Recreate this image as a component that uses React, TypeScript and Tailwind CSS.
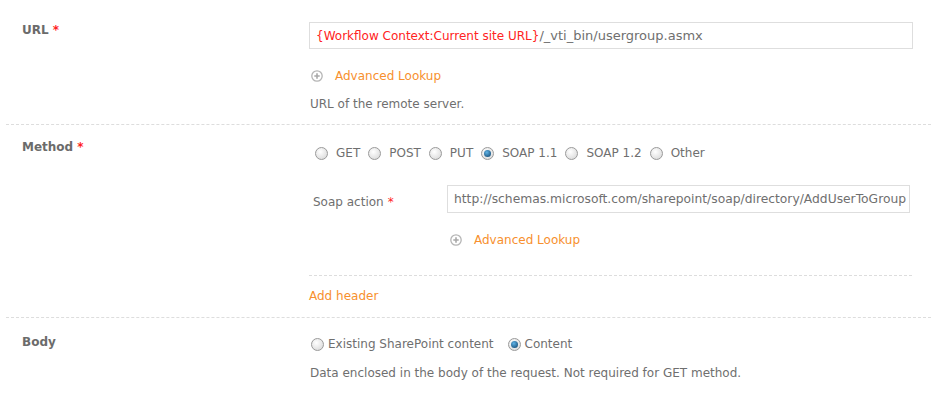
import React from "react";

const Radio: React.FC<{ checked?: boolean }> = ({ checked }) => (
  <span className="inline-flex h-[13px] w-[13px] shrink-0 items-center justify-center rounded-full border border-[#9a9a9a] bg-[radial-gradient(circle_at_40%_35%,#ffffff,#d4d4d4)]">
    {checked && (
      <span className="h-[7px] w-[7px] rounded-full bg-[radial-gradient(circle_at_40%_35%,#5fb3e6,#0b3d66)]" />
    )}
  </span>
);

const PlusIcon: React.FC = () => (
  <svg width="12" height="12" viewBox="0 0 12 12" className="shrink-0">
    <circle cx="6" cy="6" r="5.2" fill="#fff" stroke="#b5b5b5" strokeWidth="1.3" />
    <path d="M6 3.3v5.4M3.3 6h5.4" stroke="#a8a8a8" strokeWidth="1.6" />
  </svg>
);

const Lookup: React.FC = () => (
  <div className="flex items-center gap-[12px]">
    <PlusIcon />
    <span className="text-[#f7902e]">Advanced Lookup</span>
  </div>
);

const Star = () => <span className="ml-1 text-[#ff1f1f]">*</span>;

const Dashed: React.FC<{ className?: string }> = ({ className }) => (
  <div className={`border-t border-dashed border-[#dddddd] ${className ?? ""}`} />
);

const App: React.FC = () => {
  return (
    <div
      className="h-[399px] w-[931px] overflow-hidden bg-white text-[12px] text-[#6f6f6f]"
      style={{ fontFamily: '"DejaVu Sans", Verdana, sans-serif' }}
    >
      {/* URL */}
      <div className="flex h-[124px] pt-[22px]">
        <div className="-mt-[1px] w-[309px] pl-[22px] font-bold text-[#6b6b6b]">
          URL<Star />
        </div>
        <div className="flex w-[604px] flex-col">
          <div className="flex h-[27px] items-center border border-[#dedede] px-[6px]">
            <span className="text-[#ff2323]">{"{Workflow Context:Current site URL}"}</span>
            <span className="text-[13px]">/_vti_bin/usergroup.asmx</span>
          </div>
          <div className="mt-[18px] pl-[2px]">
            <Lookup />
          </div>
          <div className="mt-[10px] pl-px">URL of the remote server.</div>
        </div>
      </div>
      <Dashed className="ml-[6px]" />

      {/* Method */}
      <div className="flex h-[193px] pt-[17px]">
        <div className="-mt-[4px] w-[309px] pl-[22px] font-bold text-[#6b6b6b]">
          Method<Star />
        </div>
        <div className="flex w-[604px] flex-col">
          <div className="flex items-center pl-[6px] pt-[2px]">
            {[
              ["GET", false],
              ["POST", false],
              ["PUT", false],
              ["SOAP 1.1", true],
              ["SOAP 1.2", false],
              ["Other", false],
            ].map(([label, checked]) => (
              <label key={label as string} className="mr-[8px] flex items-center gap-[8px]">
                <Radio checked={checked as boolean} />
                <span>{label as string}</span>
              </label>
            ))}
          </div>
          <div className="mt-[23px] flex items-start">
            <div className="w-[138px] pl-[4px] pt-[8px]">
              Soap action<Star />
            </div>
            <div className="flex w-[463px] flex-col">
              <div className="flex h-[28px] items-center overflow-hidden whitespace-nowrap border border-[#dedede] px-[6px] text-[12.3px]">
                http://schemas.microsoft.com/sharepoint/soap/directory/AddUserToGroup
              </div>
              <div className="mt-[18px] pl-[3px]">
                <Lookup />
              </div>
            </div>
          </div>
          <Dashed className="mt-[26px] w-[603px]" />
          <div className="mt-[11px] text-[#f7902e]">Add header</div>
        </div>
      </div>
      <Dashed className="-mt-[1px] ml-[6px]" />

      {/* Body */}
      <div className="flex pt-[17px]">
        <div className="-mt-[2px] w-[309px] pl-[22px] font-bold text-[#6b6b6b]">Body</div>
        <div className="flex flex-col">
          <div className="flex items-center pl-[2px]">
            <label className="flex items-center gap-[4px]">
              <Radio />
              <span>Existing SharePoint content</span>
            </label>
            <label className="ml-[14px] flex items-center gap-[4px]">
              <Radio checked />
              <span>Content</span>
            </label>
          </div>
          <div className="mt-[11px] pl-px">Data enclosed in the body of the request. Not required for GET method.</div>
        </div>
      </div>
    </div>
  );
};

export default App;
